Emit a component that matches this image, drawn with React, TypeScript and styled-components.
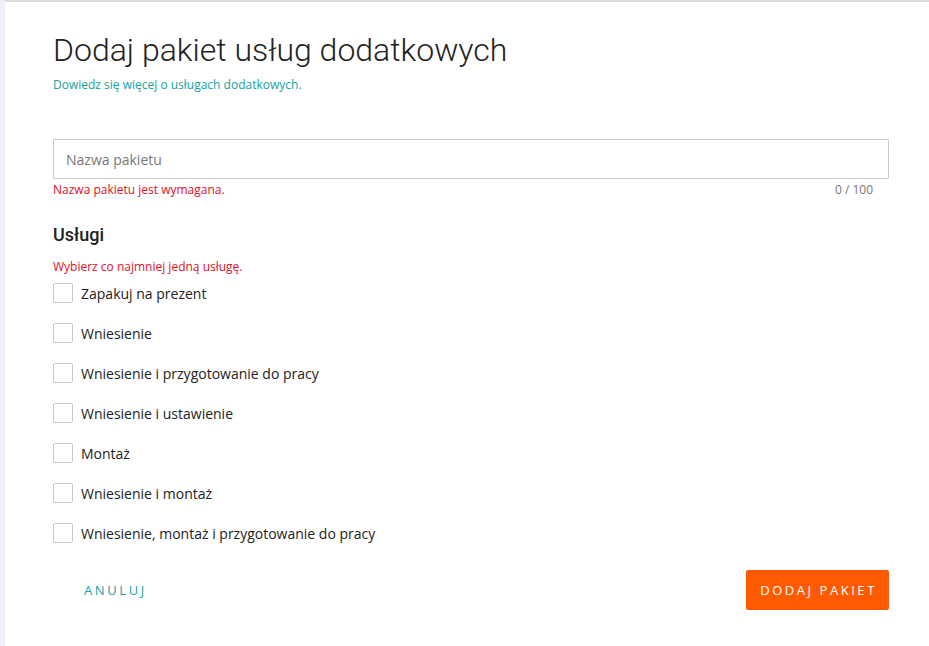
import React from "react";
import styled, { createGlobalStyle } from "styled-components";

const Global = createGlobalStyle`
  html, body { margin: 0; padding: 0; background: #fff; }
  body { font-family: "Open Sans", sans-serif; }
  * { box-sizing: border-box; }
`;

const Page = styled.div`
  display: flex;
  width: 929px;
  height: 646px;
  background: #fff;
`;

const SideStrip = styled.div`
  width: 5px;
  flex: none;
  background: #eef1f5;
`;

const Panel = styled.div`
  flex: 1;
  border-top: 2px solid #dcdcdc;
  padding: 29px 40px 0 48px;
  display: flex;
  flex-direction: column;
`;

const Title = styled.h1`
  margin: 0;
  font-family: Roboto, sans-serif;
  font-weight: 300;
  font-size: 32px;
  line-height: 38px;
  color: #222;
`;

const Subtitle = styled.a`
  margin-top: 8px;
  font-size: 12px;
  line-height: 16px;
  color: #12a4a2;
  text-decoration: none;
`;

const Field = styled.div`
  margin-top: 46px;
  display: flex;
  flex-direction: column;
`;

const Input = styled.input`
  width: 100%;
  height: 40px;
  border: 1px solid #c8c8c8;
  border-radius: 1px;
  padding: 0 12px;
  font-family: "Open Sans", sans-serif;
  font-size: 14px;
  color: #333;
  outline: none;
  &::placeholder { color: #777; }
`;

const HelpRow = styled.div`
  display: flex;
  justify-content: space-between;
  margin-top: 3px;
  font-size: 12px;
  line-height: 16px;
`;

const ErrorText = styled.span`
  font-size: 12px;
  line-height: 16px;
  color: #e0102a;
`;

const Counter = styled.span`
  color: #777;
  padding-right: 16px;
`;

const SectionTitle = styled.h2`
  margin: 25px 0 0;
  font-family: Roboto, sans-serif;
  font-weight: 500;
  font-size: 18px;
  line-height: 24px;
  color: #222;
`;

const SectionError = styled(ErrorText)`
  margin-top: 12px;
  display: block;
`;

const ServiceList = styled.div`
  display: flex;
  flex-direction: column;
  gap: 20px;
  margin-top: 8px;
`;

const ServiceRow = styled.label`
  display: flex;
  align-items: center;
  gap: 8px;
  height: 20px;
  font-size: 14px;
  color: #222;
`;

const Box = styled.span`
  width: 20px;
  height: 20px;
  border: 1px solid #c8c8c8;
  border-radius: 2px;
  background: #fff;
  flex: none;
`;

const Actions = styled.div`
  display: flex;
  justify-content: space-between;
  align-items: center;
  margin-top: 27px;
`;

const TextButton = styled.button`
  background: none;
  border: none;
  padding: 0 31px;
  height: 40px;
  font-family: "Open Sans", sans-serif;
  font-size: 13px;
  letter-spacing: 2.6px;
  color: #12a4a2;
  cursor: pointer;
`;

const PrimaryButton = styled.button`
  background: #ff5a00;
  border: none;
  border-radius: 2px;
  height: 40px;
  padding: 0 0 0 2px;
  width: 143px;
  font-family: "Open Sans", sans-serif;
  font-size: 13px;
  letter-spacing: 2.55px;
  color: #fff;
  cursor: pointer;
`;

const services = [
  "Zapakuj na prezent",
  "Wniesienie",
  "Wniesienie i przygotowanie do pracy",
  "Wniesienie i ustawienie",
  "Montaż",
  "Wniesienie i montaż",
  "Wniesienie, montaż i przygotowanie do pracy",
];

export default function App() {
  return (
    <>
      <Global />
      <Page>
        <SideStrip />
        <Panel>
          <Title>Dodaj pakiet usług dodatkowych</Title>
          <Subtitle>Dowiedz się więcej o usługach dodatkowych.</Subtitle>
          <Field>
            <Input placeholder="Nazwa pakietu" />
            <HelpRow>
              <ErrorText>Nazwa pakietu jest wymagana.</ErrorText>
              <Counter>0 / 100</Counter>
            </HelpRow>
          </Field>
          <SectionTitle>Usługi</SectionTitle>
          <SectionError>Wybierz co najmniej jedną usługę.</SectionError>
          <ServiceList>
            {services.map((s) => (
              <ServiceRow key={s}>
                <Box />
                {s}
              </ServiceRow>
            ))}
          </ServiceList>
          <Actions>
            <TextButton>ANULUJ</TextButton>
            <PrimaryButton>DODAJ PAKIET</PrimaryButton>
          </Actions>
        </Panel>
      </Page>
    </>
  );
}
